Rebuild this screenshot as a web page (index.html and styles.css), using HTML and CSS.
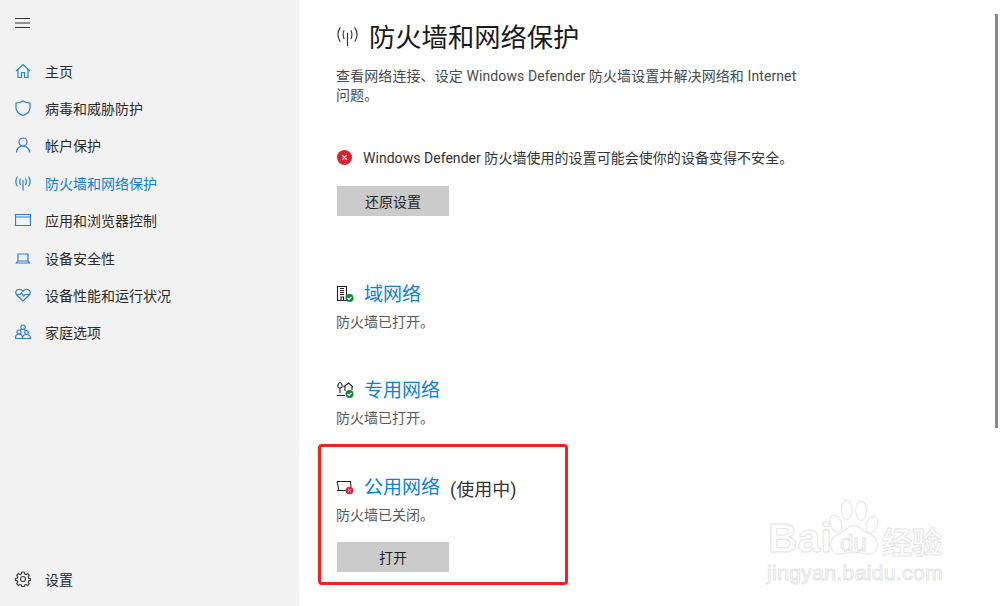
FILE: index.html
```html
<!DOCTYPE html>
<html lang="zh-CN">
<head>
<meta charset="utf-8">
<title>防火墙和网络保护</title>
<link rel="stylesheet" href="styles.css">
</head>
<body>
<div class="app">
  <aside class="sidebar">
    <div class="menu-btn">
      <svg class="ico-menu" width="15" height="10" viewBox="0 0 15 10"><path d="M0 .5h15M0 5h15M0 9.500h15" stroke="#333" stroke-width="1" fill="none"/></svg>
    </div>
    <nav class="nav">
      <div class="nav-item"><svg class="ico" viewBox="0 0 16 16"><path d="M1 8 8 1.500 15 8M3 6.500V14.500H6.500V9.500H9.500V14.500H13V6.500"/></svg><span>主页</span></div>
      <div class="nav-item"><svg class="ico" viewBox="0 0 16 16"><path d="M8 1C6 2.500 3.500 3 1 3V8C1 11.500 4 14 8 15.500C12 14 15 11.500 15 8V3C12.500 3 10 2.500 8 1Z"/></svg><span>病毒和威胁防护</span></div>
      <div class="nav-item"><svg class="ico" viewBox="0 0 16 16"><circle cx="8" cy="5" r="4"/><path d="M1.500 15.500C1.500 11.500 4.500 9 8 9S14.500 11.500 14.500 15.500"/></svg><span>帐户保护</span></div>
      <div class="nav-item active"><svg class="ico" viewBox="0 0 16 16"><path d="M8 5V15.500M5.500 3.500C4.500 5.500 4.500 8 5.500 10M10.500 3.500C11.500 5.500 11.500 8 10.500 10M2.500 1.500C0.500 4.500 0.500 8.500 2.500 11.500M13.500 1.500C15.500 4.500 15.500 8.500 13.500 11.500"/></svg><span>防火墙和网络保护</span></div>
      <div class="nav-item"><svg class="ico" viewBox="0 0 16 16"><path d="M.5 2.500H15.500V13.500H.5ZM.5 5H15.500"/></svg><span>应用和浏览器控制</span></div>
      <div class="nav-item"><svg class="ico" viewBox="0 0 16 16"><path d="M3 4H13V11H3ZM3 11 1.500 13H14.500L13 11M1.500 13H14.500"/></svg><span>设备安全性</span></div>
      <div class="nav-item"><svg class="ico" viewBox="0 0 16 16"><path d="M8 14 1.800 8C.2 6.200.5 3.800 2.300 2.800 4.200 1.800 6.500 2.500 8 4.300 9.500 2.500 11.800 1.800 13.700 2.800 15.500 3.800 15.800 6.200 14.200 8ZM1 7.500H5L6.500 6 8.500 9 10 7.500H15"/></svg><span>设备性能和运行状况</span></div>
      <div class="nav-item"><svg class="ico" viewBox="0 0 16 16"><circle cx="8" cy="3.200" r="2.200"/><circle cx="4" cy="8" r="2"/><circle cx="11.500" cy="8.500" r="1.800"/><path d="M.5 14.500C.5 11.500 2 10 4 10S7.500 11.500 7.500 14.500ZM7.500 14.500C7.500 12 9.500 10.500 11.500 10.500S15.500 12 15.500 14.500H7.500M5.500 6C6 5.500 6.500 5.300 7 5.200M10 6.800C10 6 9.700 5.500 9.300 5"/></svg><span>家庭选项</span></div>
    </nav>
    <div class="nav-item settings"><svg class="ico ico-dark" viewBox="0 0 16 16"><circle cx="8" cy="8" r="2.500"/><path d="M6.800 1H9.200L9.600 2.900 11 3.500 12.700 2.500 14.300 4.200 13.200 5.800 13.800 7.200 15.500 7.600V9.400L13.800 9.800 13.200 11.200 14.300 12.800 12.700 14.500 11 13.500 9.600 14.100 9.200 15.500H6.800L6.400 14.100 5 13.500 3.300 14.500 1.700 12.800 2.800 11.200 2.200 9.800.5 9.400V7.600L2.200 7.200 2.800 5.800 1.700 4.200 3.300 2.500 5 3.500 6.400 2.900Z"/></svg><span>设置</span></div>
  </aside>
  <main class="main">
    <header class="title-row">
      <svg class="title-ico" viewBox="0 0 24 24"><path d="M12 8V22M8.500 5.500C7 8.500 7 11.500 8.500 14.500M15.500 5.500C17 8.500 17 11.500 15.500 14.500M4.500 2.500C1.500 7 1.500 13 4.500 17.500M19.500 2.500C22.500 7 22.500 13 19.500 17.500"/></svg>
      <h1>防火墙和网络保护</h1>
    </header>
    <p class="desc">查看网络连接、设定 Windows Defender 防火墙设置并解决网络和 Internet 问题。</p>
    <div class="alert">
      <svg class="alert-ico" viewBox="0 0 16 16"><circle cx="8" cy="8" r="8" fill="#d9202e"/><path d="M5.500 5.500 10.500 10.500M10.500 5.500 5.500 10.500" stroke="#fff" stroke-width="1.300"/></svg>
      <span>Windows Defender 防火墙使用的设置可能会使你的设备变得不安全。</span>
    </div>
    <button class="btn">还原设置</button>
    <section class="net net-first">
      <div class="net-head">
        <svg class="net-ico" viewBox="0 0 18 18"><path class="k" d="M1.500 15.500V1.500H10.500V15.500M1 15.500H13M4 3.500H8M4 5.500H8M4 7.500H8M4 9.500H8M5 15.500V12H7.500V15.500"/><circle cx="13.500" cy="13" r="4" fill="#0f8a2d"/><path d="M11.500 13 13 14.500 15.500 11.800" stroke="#fff" stroke-width="1.200" fill="none"/></svg>
        <h2>域网络</h2>
      </div>
      <p class="status">防火墙已打开。</p>
    </section>
    <section class="net">
      <div class="net-head">
        <svg class="net-ico" viewBox="0 0 18 18"><path class="k" d="M4 12V7M4 7C2 7 1.500 5.500 2 4S3 1.500 4 1.500 5.500 2.500 6 4 6 7 4 7ZM1 14.500H9M7.500 6 12.500 2 17 6M9 5V10M16 5V9"/><circle cx="13.500" cy="13" r="4" fill="#0f8a2d"/><path d="M11.500 13 13 14.500 15.500 11.800" stroke="#fff" stroke-width="1.200" fill="none"/></svg>
        <h2>专用网络</h2>
      </div>
      <p class="status">防火墙已打开。</p>
    </section>
    <section class="net net-public">
      <div class="net-head">
        <svg class="net-ico" viewBox="0 0 18 18"><path class="k" d="M1 3.500H14.500L15 9M1 3.500 3 12.500H10M1 12.500H10"/><circle cx="13.500" cy="12.500" r="3.800" fill="#e0202e"/><path d="M12 11 15 14M15 11 12 14" stroke="#fff" stroke-width="1"/></svg>
        <h2>公用网络</h2><span class="in-use">(使用中)</span>
      </div>
      <p class="status">防火墙已关闭。</p>
      <button class="btn btn-open">打开</button>
    </section>
    <div class="red-box"></div>
    <div class="scroll-thumb"></div>
    <div class="watermark">
      <svg class="paw" viewBox="0 0 60 60" preserveAspectRatio="none"><g fill="#fff" stroke="#e6e6e6" stroke-width="1.200"><ellipse cx="10" cy="26" rx="6" ry="9" transform="rotate(-25 10 26)"/><ellipse cx="22" cy="12" rx="6" ry="10"/><ellipse cx="38" cy="13" rx="6" ry="10"/><ellipse cx="50" cy="27" rx="6" ry="9" transform="rotate(25 50 27)"/><path d="M30 28C22 28 20 35 10 38 1 42 2 57 14 57 20 57 25 55 30 55S40 57 46 57C58 57 59 42 50 38 40 35 38 28 30 28Z"/></g></svg>
      <span class="wm-bai">Bai</span><span class="wm-du">du</span><span class="wm-cn">经验</span>
      <span class="wm-url">jingyan.baidu.com</span>
    </div>
  </main>
</div>
</body>
</html>
```
FILE: styles.css
```css
* { box-sizing: border-box; }
html, body { margin: 0; height: 100%; overflow: hidden; }
body {
  background: #fff;
  color: #1f1f1f;
  font-family: Roboto, "Noto Sans CJK SC", sans-serif;
  font-size: 14px;
}
.app { display: flex; width: 1000px; height: 606px; }
.sidebar {
  width: 299px;
  flex: none;
  background: #f2f2f2;
  display: flex;
  flex-direction: column;
  padding-bottom: 8px;
}
.menu-btn { height: 52px; padding: 18px 0 0 15px; }
.ico-menu { display: block; }
.nav { display: flex; flex-direction: column; flex: 1; }
.nav-item {
  height: 37.4px;
  display: flex;
  align-items: center;
  gap: 14px;
  padding-left: 15px;
  color: #2b2b2b;
  white-space: nowrap;
}
.nav-item.active { color: #0f7fd8; }
.settings { color: #2b2b2b; }
.ico {
  width: 16px;
  height: 16px;
  flex: none;
  fill: none;
  stroke: #2a7fd5;
  stroke-width: 1.200;
}
.ico-dark { stroke: #444; }
.main { position: relative; flex: 1; padding: 21px 0 0 37px; }
.title-row { display: flex; align-items: center; gap: 10px; height: 34px; }
.title-ico { width: 23px; height: 23px; fill: none; stroke: #333; stroke-width: 1.200; margin-top: -4px; }
h1 { margin: 0; font-size: 26.300px; font-weight: 400; color: #1a1a1a; line-height: 34px; }
.desc { margin: 12px 0 0; width: 470px; color: #4a4a4a; line-height: 19px; letter-spacing: .1px; }
.alert { display: flex; align-items: center; gap: 11px; margin-top: 42px; padding-left: 1px; height: 20px; color: #333; white-space: nowrap; letter-spacing: .04px; }
.alert-ico { width: 15px; height: 15px; flex: none; }
.btn {
  display: block;
  width: 112px;
  height: 30px;
  margin: 19px 0 0 1px;
  border: 0;
  background: #cbcbcb;
  color: #1f1f1f;
  font: inherit;
  padding: 0;
}
.net { margin-top: 43px; }
.net-first { margin-top: 63px; }
.net-public { margin-top: 44px; }
.net-head { display: flex; align-items: center; height: 30px; }
.net-ico { width: 18px; height: 18px; flex: none; margin-right: 10px; }
.net-ico .k { fill: none; stroke: #222; stroke-width: 1.100; }
h2 { margin: 2px 0 0; font-size: 19px; font-weight: 400; color: #0f7fd8; line-height: 30px; }
.in-use { margin: 2px 0 0 10px; font-size: 18px; color: #333; }
.status { margin: 3px 0 0; color: #5a5a5a; line-height: 20px; }
.btn-open { margin-top: 17px; }
.red-box {
  position: absolute;
  left: 19px;
  top: 444px;
  width: 250px;
  height: 141px;
  border: 3px solid #f4211e;
  border-radius: 4px;
}
.scroll-thumb {
  position: absolute;
  left: 696px;
  top: 14px;
  width: 3px;
  height: 414px;
  background: #8a8a8a;
}
.watermark {
  position: absolute;
  left: 466px;
  top: 498px;
  width: 190px;
  height: 100px;
  font-family: "Liberation Sans", sans-serif;
  color: #fff;
  -webkit-text-stroke: 1px #e4e4e4;
}
.paw { position: absolute; left: 62px; top: 0; width: 54px; height: 59px; }
.wm-bai, .wm-du, .wm-cn, .wm-url { position: absolute; white-space: nowrap; }
.wm-bai { left: 3px; top: 17px; font-size: 41px; font-weight: 700; }
.wm-du { left: 75px; top: 31px; font-size: 24px; }
.wm-cn { left: 117px; top: 22px; font-size: 30px; font-family: "Noto Sans CJK SC", sans-serif; line-height: 40px; font-weight: 700; }
.wm-url { left: 2px; top: 63px; font-size: 21px; letter-spacing: .4px; }
```
